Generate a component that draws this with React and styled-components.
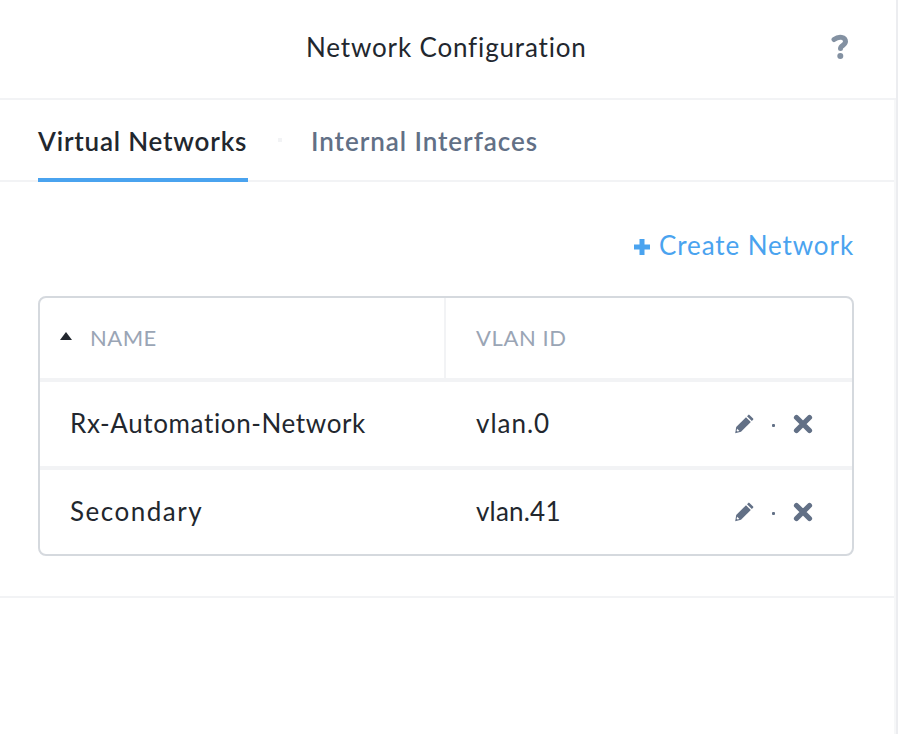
import React from "react";
import styled, { createGlobalStyle } from "styled-components";

const GlobalStyle = createGlobalStyle`
  * { box-sizing: border-box; }
  body { margin: 0; background: #fff; font-family: Lato, "Open Sans", sans-serif; color: #22272e; }
`;

const Dialog = styled.div`
  width: 898px;
  height: 734px;
  display: flex;
  flex-direction: column;
  border-right: 2px solid #ecedf0;
  background: #fff;
  overflow: hidden;
`;

const Label = styled.span`
  font-size: ${(p) => p.$size || 26}px;
  font-weight: ${(p) => p.$weight || 400};
  letter-spacing: ${(p) => p.$spacing || 0}px;
  line-height: 32px;
  white-space: nowrap;
`;

const Header = styled.header`
  height: 100px;
  display: grid;
  grid-template-columns: 306px 1fr 65px;
  align-items: center;
  padding-bottom: 4px;
  border-bottom: 2px solid #f2f3f5;
`;

const Title = styled.h1`
  grid-column: 2;
  margin: 0;
  font-size: 26px;
  line-height: 32px;
`;

const HelpButton = styled.button`
  width: 20px;
  height: 26px;
  padding: 0;
  border: 0;
  background: none;
  display: flex;
`;

const Body = styled.div`
  flex: 1;
  border-right: 2px solid #f6f7f8;
`;

const Tabs = styled.nav`
  height: 82px;
  padding-left: 38px;
  display: flex;
  border-bottom: 2px solid #f2f3f5;
`;

const Tab = styled.div`
  height: 82px;
  padding-top: 25px;
  width: ${(p) => p.$width}px;
  color: ${(p) => (p.$active ? "#22272e" : "#627086")};
  border-bottom: 4px solid ${(p) => (p.$active ? "#4aa3ef" : "transparent")};
`;

const TabDot = styled.i`
  width: 4px;
  height: 4px;
  margin: 38px 29px 0 30px;
  background: #f2f3f5;
`;

const Content = styled.main`
  height: 416px;
  padding: 47px 40px 0 38px;
  border-bottom: 2px solid #f2f3f5;
`;

const CreateLink = styled.div`
  height: 67px;
  display: flex;
  justify-content: flex-end;
  color: #4aa3ef;
`;

const PlusIcon = styled.svg`
  width: 16px;
  height: 16px;
  margin: 10px 9px 0 0;
`;

const Table = styled.div`
  width: 816px;
  height: 260px;
  border: 2px solid #d5d9de;
  border-radius: 8px;
  overflow: hidden;
`;

const Row = styled.div`
  display: grid;
  grid-template-columns: 406px 1fr 118px;
  height: ${(p) => p.$height}px;
  border-bottom: ${(p) => (p.$last ? "0" : "4px solid #f2f3f5")};
`;

const HeadCell = styled.div`
  display: flex;
  align-items: center;
  padding-left: ${(p) => p.$indent}px;
  border-right: ${(p) => (p.$divider ? "2px solid #f2f3f5" : "0")};
  color: #9aa5b5;
`;

const SortIcon = styled.svg`
  width: 12px;
  height: 8px;
  margin: 0 18px 4px 0;
`;

const Cell = styled.div`
  display: flex;
  align-items: center;
  padding: 0 0 2px 30px;
`;

const Actions = styled.div`
  display: flex;
  align-items: center;
  color: #627086;
`;

const ActionIcon = styled.svg`
  width: 20px;
  height: 20px;
`;

const ActionDot = styled.i`
  width: 3px;
  height: 3px;
  border-radius: 1px;
  margin: 2px 18px 0;
  background: #627086;
`;

const networks = [
  { name: "Rx-Automation-Network", nameSpacing: 0.62, vlan: "vlan.0", vlanSpacing: 1, height: 88 },
  { name: "Secondary", nameSpacing: 1.5, vlan: "vlan.41", vlanSpacing: 0.2, height: 84 },
];

function RowActions() {
  return (
    <Actions>
      <ActionIcon viewBox="0 0 20 20" fill="currentColor">
        <path d="M2.2 13 12 3.2l4.8 4.8L7 17.8 1.2 19.2Z" />
        <path d="m13 2.2 1.3-1.3q.6-.6 1.2 0l3.6 3.6q.6.6 0 1.2L17.8 7Z" />
        <path d="m3.2 14.8 2.2 2.2-1.9.6-.9-.9Z" fill="#fff" />
      </ActionIcon>
      <ActionDot />
      <ActionIcon viewBox="0 0 20 20" fill="none" stroke="currentColor" strokeWidth="5.2" strokeLinecap="round">
        <path d="m3.5 3.5 13 13m0-13-13 13" />
      </ActionIcon>
    </Actions>
  );
}

export default function App() {
  return (
    <>
      <GlobalStyle />
      <Dialog>
        <Header>
          <Title><Label $spacing={0.84}>Network Configuration</Label></Title>
          <HelpButton aria-label="Help">
            <svg width="20" height="26" viewBox="0 0 20 26" fill="none">
              <path d="M3 5.5C8 1.8 14.5 2.8 14.5 7.6c0 3.8-5 3.6-5 7" stroke="#8391a2" strokeWidth="5" strokeLinecap="round" />
              <circle cx="9.3" cy="22" r="3" fill="#8391a2" />
            </svg>
          </HelpButton>
        </Header>
        <Body>
          <Tabs>
            <Tab $active $width={210}><Label $weight={600} $spacing={0.8}>Virtual Networks</Label></Tab>
            <TabDot />
            <Tab $width={230}><Label $weight={600} $spacing={0.94}>Internal Interfaces</Label></Tab>
          </Tabs>
          <Content>
            <CreateLink>
              <PlusIcon viewBox="0 0 16 16" fill="none" stroke="currentColor" strokeWidth="5">
                <path d="M8 0v16M0 8h16" />
              </PlusIcon>
              <Label $spacing={0.9}>Create Network</Label>
            </CreateLink>
            <Table>
              <Row $height={84}>
                <HeadCell $indent={20} $divider>
                  <SortIcon viewBox="0 0 12 8"><path d="M6 0l6 8H0Z" fill="#22272e" /></SortIcon>
                  <Label $size={22} $spacing={0.5}>NAME</Label>
                </HeadCell>
                <HeadCell $indent={30}><Label $size={22} $spacing={0.6}>VLAN ID</Label></HeadCell>
              </Row>
              {networks.map((n, i) => (
                <Row key={n.name} $height={n.height} $last={i === networks.length - 1}>
                  <Cell><Label $spacing={n.nameSpacing}>{n.name}</Label></Cell>
                  <Cell><Label $spacing={n.vlanSpacing}>{n.vlan}</Label></Cell>
                  <RowActions />
                </Row>
              ))}
            </Table>
          </Content>
        </Body>
      </Dialog>
    </>
  );
}
